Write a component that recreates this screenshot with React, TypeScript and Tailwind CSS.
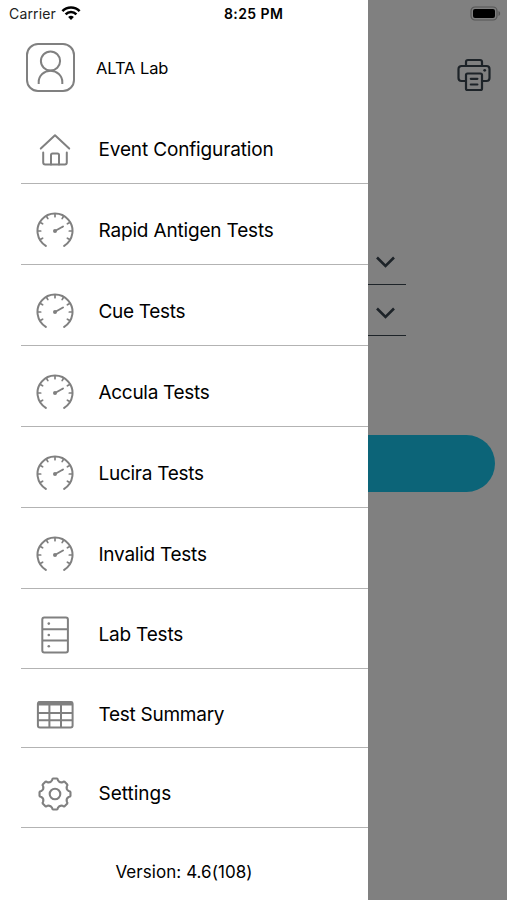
import type { ReactNode } from "react";

function HomeIcon() {
  return (
    <svg width="38" height="38" viewBox="0 0 38 38" fill="none" stroke="#808080" strokeWidth="2" strokeLinecap="round" strokeLinejoin="round">
      <path d="M4.8 17.6 19 4.200l14.200 13.400" />
      <path d="M7.200 21.500V31.500a2 2 0 0 0 2 2h19.600a2 2 0 0 0 2-2v-10" />
      <path d="M15 33.500v-9.500a1.500 1.500 0 0 1 1.500-1.500h5A1.500 1.500 0 0 1 23 24v9.500" />
    </svg>
  );
}

function GaugeIcon() {
  return (
    <svg width="38" height="38" viewBox="0 0 38 38" fill="none" stroke="#808080" strokeWidth="2" strokeLinecap="round">
      <path d="M9.800 33.900a17.500 17.500 0 1 1 18.400 0" />
      {[-120, -90, -60, -30, 0, 30, 60, 90, 120].map((a) => (
        <path key={a} d="M19 2v2.700" strokeWidth="1.700" transform={`rotate(${a} 19 19)`} />
      ))}
      <path d="M19 19l8-4.500" />
      <circle cx="19" cy="19" r="2" fill="#808080" stroke="none" />
    </svg>
  );
}

function CabinetIcon() {
  return (
    <svg width="38" height="38" viewBox="0 0 38 38" fill="none" stroke="#808080" strokeWidth="2">
      <rect x="6.300" y="1.500" width="25.600" height="35" rx="2" />
      <path d="M6.300 13.200h25.600M6.300 24.600h25.600" />
      <g fill="#808080" stroke="none">
        <circle cx="12.800" cy="7.600" r="1.300" />
        <circle cx="12.800" cy="19" r="1.300" />
        <circle cx="12.800" cy="30.300" r="1.300" />
      </g>
    </svg>
  );
}

function TableIcon() {
  return (
    <svg width="38" height="38" viewBox="0 0 38 38" fill="none" stroke="#808080" strokeWidth="2">
      <rect x="1.900" y="6" width="34.700" height="25.400" rx="2" />
      <path d="M2 7.500h34.500" strokeWidth="4" />
      <path d="M2 17h34.500M2 24.200h34.500M13.400 9v22.500M25 9v22.500" />
    </svg>
  );
}

// eight rounded teeth, one every 45 degrees
const gearPath = (() => {
  const at = (deg: number, r: number) => {
    const t = ((deg - 90) * Math.PI) / 180;
    return `${(19 + r * Math.cos(t)).toFixed(2)} ${(19 + r * Math.sin(t)).toFixed(2)}`;
  };
  let d = `M${at(-7, 15.6)}`;
  for (let i = 0; i < 8; i++) {
    const a = i * 45;
    d += ` L${at(a + 7, 15.6)} Q${at(a + 11, 15.4)} ${at(a + 12, 14.1)}`;
    d += ` Q${at(a + 22.5, 11.8)} ${at(a + 33, 14.1)} Q${at(a + 34, 15.4)} ${at(a + 38, 15.6)}`;
  }
  return d + "Z";
})();

function GearIcon() {
  return (
    <svg width="38" height="38" viewBox="0 0 38 38" fill="none" stroke="#808080" strokeWidth="2.100" strokeLinejoin="round">
      <path d={gearPath} />
      <circle cx="19" cy="19" r="5.300" />
    </svg>
  );
}

function UserIcon() {
  return (
    <svg width="49" height="49" viewBox="0 0 49 49" fill="none" stroke="#808080" strokeWidth="2">
      <rect x="1" y="1" width="47" height="47" rx="11" />
      <circle cx="24.500" cy="18" r="9.600" />
      <path d="M12.700 41v-2a11.800 11.300 0 0 1 23.600 0v2" />
    </svg>
  );
}

function WifiIcon() {
  return (
    <svg width="20" height="16" viewBox="0 0 20 16" fill="none" stroke="#000" strokeWidth="2.600">
      <path d="M1.400 6.100a12.200 12.200 0 0 1 17.200 0" />
      <path d="M4.600 9.300a7.600 7.600 0 0 1 10.800 0" />
      <path d="M10 15l-2.900-2.900a4.100 4.100 0 0 1 5.800 0z" fill="#000" stroke="none" />
    </svg>
  );
}

function PrinterIcon() {
  return (
    <svg width="34" height="34" viewBox="0 0 34 34" fill="none" stroke="#1d2328" strokeWidth="2.200" strokeLinecap="round" strokeLinejoin="round">
      <path d="M9 8V4a2 2 0 0 1 2-2h12a2 2 0 0 1 2 2v4" />
      <path d="M9 23H4.500a3 3 0 0 1-3-3v-9a3 3 0 0 1 3-3h25a3 3 0 0 1 3 3v9a3 3 0 0 1-3 3H25" />
      <rect x="9" y="15.500" width="16" height="16.500" rx="1.500" />
      <path d="M13.800 20.800h6.600M13.800 26.500h6.600" />
      <circle cx="27.700" cy="12.300" r="1.400" fill="#1d2328" stroke="none" />
    </svg>
  );
}

const items: { label: string; icon: ReactNode; row: string }[] = [
  { label: "Event Configuration", icon: <HomeIcon />, row: "h-[81px] pt-[14px] tracking-[-0.15px]" },
  { label: "Rapid Antigen Tests", icon: <GaugeIcon />, row: "h-[81px] pt-[14px] tracking-[-0.17px]" },
  { label: "Cue Tests", icon: <GaugeIcon />, row: "h-[81px] pt-[14px] tracking-[-0.3px]" },
  { label: "Accula Tests", icon: <GaugeIcon />, row: "h-[81px] pt-[14px] tracking-[-0.3px]" },
  { label: "Lucira Tests", icon: <GaugeIcon />, row: "h-[81px] pt-[14px] tracking-[-0.27px]" },
  { label: "Invalid Tests", icon: <GaugeIcon />, row: "h-[81px] pt-[14px] tracking-[-0.25px]" },
  { label: "Lab Tests", icon: <CabinetIcon />, row: "h-[80px] pt-[12px] tracking-[-0.2px]" },
  { label: "Test Summary", icon: <TableIcon />, row: "h-[79px] pt-[13px] tracking-[-0.27px]" },
  { label: "Settings", icon: <GearIcon />, row: "h-[80px] pt-[13px]" },
];

function Select() {
  return (
    <div className="flex h-[51px] w-[38px] items-center border-b-[1.5px] border-[#1d2328] pl-[7.5px] pt-[6px]">
      <svg width="19" height="12" viewBox="0 0 19 12" fill="none" stroke="#1d2328" strokeWidth="2.600">
        <path d="M1 1.500l8.500 8.500L18 1.500" />
      </svg>
    </div>
  );
}

export default function App() {
  return (
    <div className="flex h-[900px] w-[507px] overflow-hidden bg-[#808080] font-['Inter','Liberation_Sans',sans-serif] text-black">
      <aside className="flex w-[368px] shrink-0 flex-col bg-white">
        {/* Status bar */}
        <div className="flex h-[26px] items-center pl-[9px] text-[14px]">
          <span className="w-[52px] whitespace-nowrap tracking-[0.15px] text-[#222]">Carrier</span>
          <WifiIcon />
          <span className="ml-[143px] whitespace-nowrap font-semibold tracking-[0.4px]">8:25 PM</span>
        </div>

        <div className="flex h-[77px] items-center gap-[21px] pl-[26px] pt-[6px]">
          <UserIcon />
          <span className="pt-px text-[16.5px] tracking-[-0.1px]">ALTA Lab</span>
        </div>

        <nav className="ml-[21px]">
          {items.map((item) => (
            <div key={item.label} className={`flex items-center border-b border-[#b3b3b3] pl-[14.5px] text-[19px] ${item.row}`}>
              {item.icon}
              <span className="ml-[25px] whitespace-nowrap pt-px">{item.label}</span>
            </div>
          ))}
        </nav>

        <p className="mt-[32px] text-center text-[17px] leading-6 tracking-[0.06px]">Version: 4.6(108)</p>
      </aside>

      <main className="flex flex-1 flex-col">
        <div className="flex h-[26px] items-center justify-end pr-[6px]">
          <svg width="31" height="15" viewBox="0 0 31 15">
            <rect x="1" y="1" width="26" height="13" rx="4" fill="none" stroke="#555" strokeWidth="1.200" />
            <rect x="3" y="3" width="22" height="9" rx="2" fill="#000" />
            <path d="M28.500 5v5c2.200-.7 2.200-4.300 0-5z" fill="#555" />
          </svg>
        </div>
        <div className="mt-[32px] flex justify-end pr-4">
          <PrinterIcon />
        </div>
        <div className="mt-[142px]">
          <Select />
          <Select />
        </div>
        <div className="mt-[99px] h-[56.5px] w-[126.5px] rounded-r-full bg-[#0c6478]" />
      </main>
    </div>
  );
}
